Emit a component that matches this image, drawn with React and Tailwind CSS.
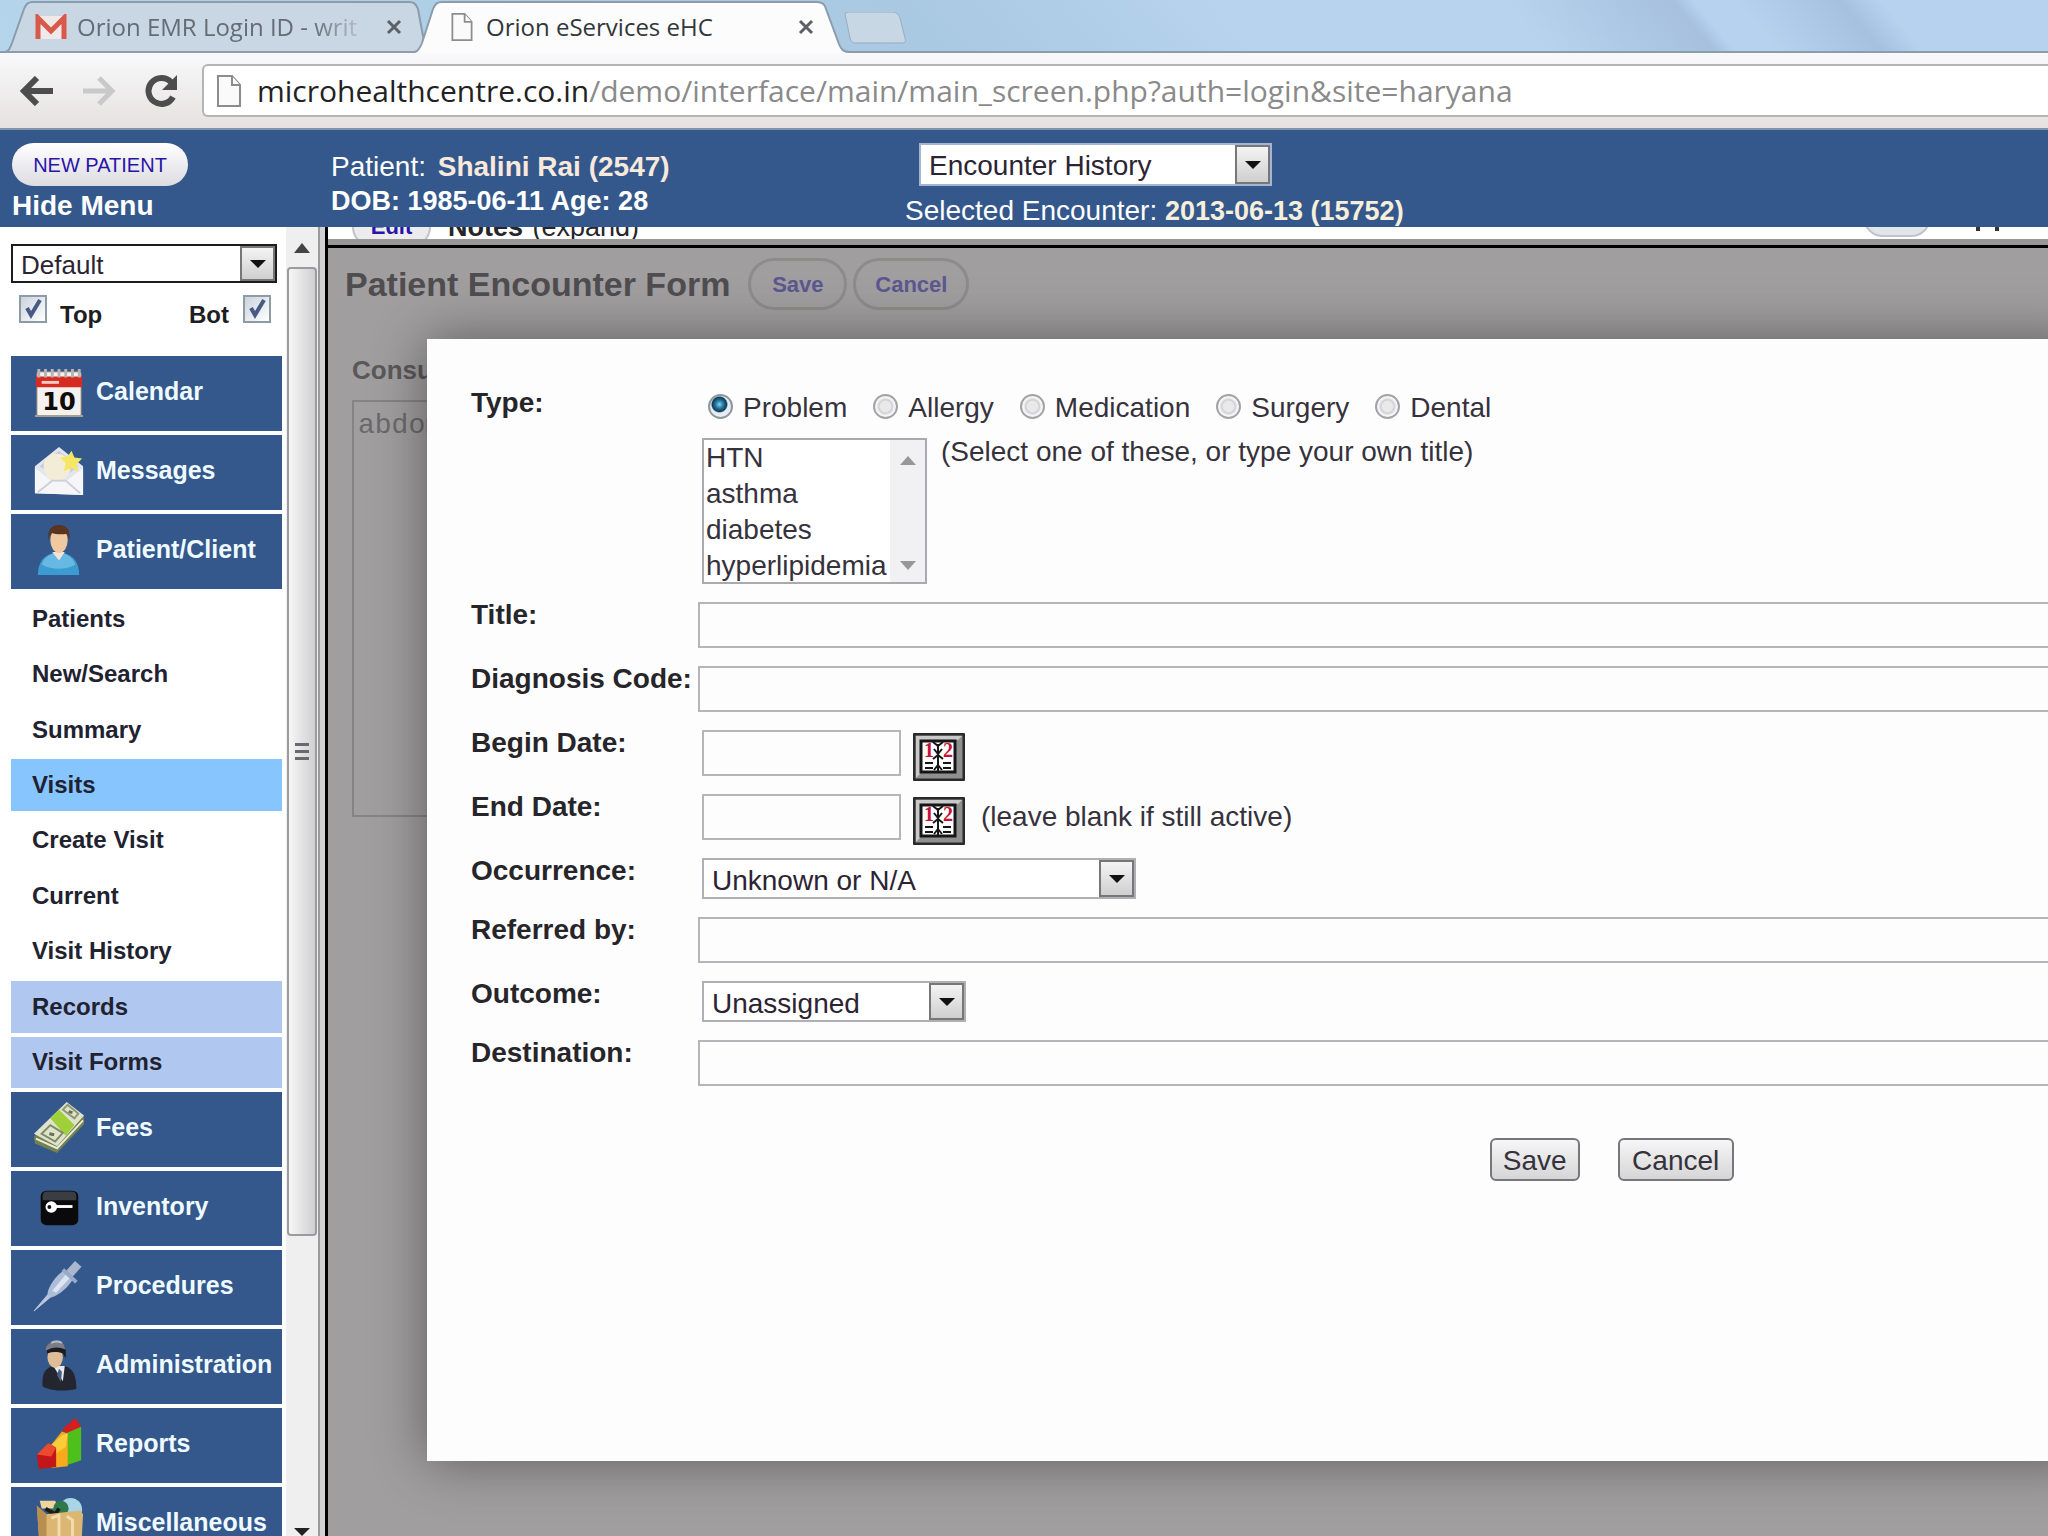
import React, { useState } from 'react';

const CalendarIcon = () => (
  <svg viewBox="0 0 52 54" className="w-13 h-13 shrink-0">
    <rect x="3" y="6" width="46" height="46" rx="2" fill="#f4f1ee" stroke="#8b7a70" />
    <path d="M2 11h48v11H2z" fill="#d62b22" />
    <path d="M5 3v9M12 3v9M19 3v9M26 3v9M33 3v9M40 3v9M47 3v9" stroke="#b9b3b3" strokeWidth="3" />
    <path d="M8 17h18" stroke="#f6c9c4" strokeWidth="3" />
    <path d="M1 52h50" stroke="#a4a08a" strokeWidth="2" />
    <text x="26" y="46" textAnchor="middle" fontSize="25" fontWeight="bold" fontFamily="DejaVu Sans, sans-serif" fill="#0c0c0c">10</text>
  </svg>
);

const MessagesIcon = () => (
  <svg viewBox="0 0 52 54" className="w-13 h-13 shrink-0">
    <path d="M1 22 26 2 51 22v30L1 50z" fill="#e3e6ee" />
    <path d="M6 22 26 6l20 16-20 16z" fill="#c6cddd" />
    <circle cx="24" cy="23" r="14" fill="#f3ecd6" />
    <path d="m39 6 3 7 8 1-6 6 2 8-7-4-8 3 2-8-6-6 8-1z" fill="#f5e663" />
    <path d="M1 24l18 14h14l18-14v28L1 50z" fill="#f6f6f9" />
    <path d="M4 49l15-12h14l15 13" fill="none" stroke="#cdd0da" strokeWidth="2" />
  </svg>
);

const PatientIcon = () => (
  <svg viewBox="0 0 52 54" className="w-13 h-13 shrink-0">
    <path d="M4 53c0-13 6-21 17-23h9c11 2 17 10 17 23z" fill="#3c9bd0" />
    <path d="M8 42c2-6 7-10 13-12h9c7 2 11 7 13 12-10 6-24 6-35 0z" fill="#67b9e4" />
    <path d="M19 29h13l-6 9z" fill="#f3e3d8" />
    <ellipse cx="26" cy="17" rx="9" ry="13" fill="#f0c9a0" />
    <path d="M15 16C14 5 19 1 26 1s12 4 11 15l-3-6c-5 1-11 1-16-1z" fill="#5a3420" />
  </svg>
);

const FeesIcon = () => (
  <svg viewBox="0 0 52 54" className="w-13 h-13 shrink-0">
    <path d="M0 36 34 1l18 14v8L24 53 1 43z" fill="#74804f" />
    <path d="M0 33 34 0l18 14-28 32z" fill="#dfe3cc" />
    <path d="M17 17 26 8l16 16-9 11z" fill="#9fd03a" />
    <path d="m8 33 9-9 13 8-8 9z" fill="none" stroke="#7d8a62" strokeWidth="2" />
    <path d="m30 8 5-5 11 9-4 5z" fill="none" stroke="#8d9a72" strokeWidth="2" />
    <path d="M2 38l22 10 27-29" fill="none" stroke="#e9ecd8" strokeWidth="2" />
    <path d="M16 33l5 1M36 10l4 1" stroke="#68704f" strokeWidth="3" />
  </svg>
);

const InventoryIcon = () => (
  <svg viewBox="0 0 52 54" className="w-13 h-13 shrink-0">
    <rect x="7" y="10" width="39" height="36" rx="6" fill="#0a0a0c" />
    <path d="M9 16c0-4 2-5 5-5h25c3 0 5 1 5 5v4H9z" fill="#3a3d42" />
    <circle cx="18" cy="27" r="6" fill="#fff" />
    <circle cx="16" cy="27" r="2" fill="#111" />
    <path d="M22 25h18v3h-18z" fill="#fff" />
  </svg>
);

const ProceduresIcon = () => (
  <svg viewBox="0 0 52 54" className="w-13 h-13 shrink-0">
    <path d="M0 53 16 34l3 3z" fill="#b9c6dc" stroke="#b9c6dc" strokeWidth="1" />
    <path d="M14 35c1-8 9-19 18-25l9 9c-5 9-14 17-23 20z" fill="#aebdd7" />
    <path d="M19 32 33 15l4 4-14 15z" fill="#dde5f1" />
    <path d="m30 10 14 13" stroke="#9aabc8" strokeWidth="4" />
    <path d="M37 14 46 4" stroke="#a9b8d0" strokeWidth="9" />
  </svg>
);

const AdminIcon = () => (
  <svg viewBox="0 0 52 54" className="w-13 h-13 shrink-0">
    <path d="M9 49c-1-12 2-19 11-21h12c9 3 12 10 12 24-8 2-26 3-35-3z" fill="#23262f" />
    <path d="M20 28h12l-2 16z" fill="#e7e9ef" />
    <path d="m26 31 3 3-1 11-4-7z" fill="#4a5a80" />
    <ellipse cx="22" cy="19" rx="8" ry="11" fill="#e0bd99" />
    <path d="M12 10C15 2 27-2 31 6l2 7c-6-3-13-3-19 1z" fill="#7c7c88" />
    <path d="M13 12c6-4 13-4 20-1v9l-3-5c-6-2-11-2-16 0z" fill="#1b1b20" />
    <path d="M18 4c4-2 7-2 11 0" stroke="#b8bac4" strokeWidth="2" fill="none" />
  </svg>
);

const ReportsIcon = () => (
  <svg viewBox="0 0 52 54" className="w-13 h-13 shrink-0">
    <path d="m29 12 14-12 6 9-12 9z" fill="#d51f1f" />
    <path d="M31 17 49 9v35l-18 6z" fill="#4fc01b" />
    <path d="M17 29 29 14l6 2v34l-17 2z" fill="#f9a91b" />
    <path d="m17 29 12-11 6-2-2 14-12 8z" fill="#fbcd3b" />
    <path d="M3 39 15 26l8 5v20L5 53z" fill="#c3161a" />
    <path d="m3 38 12-12 8 5-5 9z" fill="#ea4a2d" />
  </svg>
);

const MiscIcon = () => (
  <svg viewBox="0 0 52 54" className="w-13 h-13 shrink-0">
    <path d="M6 4h16l4 8H8z" fill="#eed5a0" />
    <circle cx="38" cy="13" r="12" fill="#a9d5e6" />
    <circle cx="28" cy="12" r="8" fill="#2c7a4b" />
    <path d="M12 12l10 6 4-6" stroke="#1c1c14" strokeWidth="4" fill="none" />
    <path d="M3 9l10 9 35-4 3 4-2 36H6z" fill="#dcb673" />
    <path d="M3 9l10 9v36H6z" fill="#b98f4f" />
    <path d="M18 22l8-3v30M34 20l6 4v25" stroke="#f1dcae" strokeWidth="3" fill="none" />
  </svg>
);

const topMenu = [
  { label: 'Calendar', Icon: CalendarIcon },
  { label: 'Messages', Icon: MessagesIcon },
  { label: 'Patient/Client', Icon: PatientIcon },
];

const subMenu = [
  { label: 'Patients', bg: '' },
  { label: 'New/Search', bg: '' },
  { label: 'Summary', bg: '' },
  { label: 'Visits', bg: 'bg-[#87c5ff]' },
  { label: 'Create Visit', bg: '' },
  { label: 'Current', bg: '' },
  { label: 'Visit History', bg: '' },
  { label: 'Records', bg: 'bg-[#b0c7f0]' },
  { label: 'Visit Forms', bg: 'bg-[#b0c7f0]' },
];

const bottomMenu = [
  { label: 'Fees', Icon: FeesIcon },
  { label: 'Inventory', Icon: InventoryIcon },
  { label: 'Procedures', Icon: ProceduresIcon },
  { label: 'Administration', Icon: AdminIcon },
  { label: 'Reports', Icon: ReportsIcon },
  { label: 'Miscellaneous', Icon: MiscIcon },
];

const issueTypes = ['Problem', 'Allergy', 'Medication', 'Surgery', 'Dental'];

const PageIcon = ({ className }) => (
  <svg viewBox="0 0 24 32" className={className} fill="#fafafa" stroke="#8c8c8c" strokeWidth="2">
    <path d="M1 1h14l8 9v21H1z" />
    <path d="M15 1v9h8" />
  </svg>
);

const CloseButton = ({ label }) => (
  <button type="button" aria-label={label} className="shrink-0">
    <svg viewBox="0 0 16 16" className="w-4 h-4" stroke="#5d6166" strokeWidth="3">
      <path d="M2 2l12 12M14 2 2 14" />
    </svg>
  </button>
);

const BrowserTabs = () => (
  <div className="flex h-[53px] shrink-0 border-b-2 border-[#8c9cab] bg-[linear-gradient(50deg,#b5d5ec_0%,#a9c8e2_45%,#b7d3ed_60%,#b7d3ed_74%,#a6c0de_82%,#b6d2ef_83%,#b6d2ef_85%,#a6c1df_90%,#b6d2ef_92%)] pl-1">
    <div className="relative w-[422px] h-[53px] shrink-0">
      <svg viewBox="0 0 422 53" preserveAspectRatio="none" className="absolute inset-0 w-full h-full">
        <path d="M0 52c5 0 6-4 8-9L20 9c2-5 4-7 9-7h376c5 0 7 2 9 7l8 43z" fill="#c9d6e3" stroke="#8c9cab" strokeWidth="2" />
      </svg>
      <div className="relative flex items-center h-full pl-[31px] pr-[24px]">
        <svg viewBox="0 0 32 26" className="w-8 h-[26px] shrink-0">
          <path d="M1 2h30v23H1z" fill="#efe9ea" />
          <path d="M3 25V4l13 13L29 4v21" fill="none" stroke="#d8584c" strokeWidth="5" />
        </svg>
        <span className="ml-2.5 flex-1 whitespace-nowrap text-[24px] text-[#646c76] [mask-image:linear-gradient(to_right,black_80%,transparent)]">
          Orion EMR Login ID - writ
        </span>
        <span className="ml-4 flex"><CloseButton label="Close Orion EMR Login ID" /></span>
      </div>
    </div>
    <div className="relative -ml-3 w-[436px] h-[53px] shrink-0">
      <svg viewBox="0 0 436 53" preserveAspectRatio="none" className="absolute inset-0 w-full h-full">
        <path d="M0 53c4 0 6-4 8-9L19 9c2-5 4-7 9-7h375c5 0 8 2 9 7l13 35c2 5 4 9 11 9z" fill="#fcfcfd" />
        <path d="M0 52c4 0 6-4 8-9L19 9c2-5 4-7 9-7h375c5 0 8 2 9 7l13 35c2 5 4 8 11 8" fill="none" stroke="#8c9cab" strokeWidth="2" />
      </svg>
      <div className="relative flex items-center h-full pl-9 pr-9">
        <PageIcon className="w-6 h-7 shrink-0" />
        <span className="ml-3 flex-1 whitespace-nowrap text-[24px] text-[#33363b]">Orion eServices eHC</span>
        <CloseButton label="Close Orion eServices eHC" />
      </div>
    </div>
    <button type="button" aria-label="New tab" className="-ml-1.5 mt-3 h-8 shrink-0">
      <svg viewBox="0 0 62 32" className="w-[62px] h-8">
        <path d="M1 2q0-2 3-2h44c5 0 6 2 8 6l5 20c1 4 0 5-3 5H12c-4 0-5-2-6-5z" fill="#c8d7e4" stroke="#98acbf" strokeWidth="1" />
      </svg>
    </button>
  </div>
);

const Toolbar = () => (
  <div className="flex h-[77px] shrink-0 items-center border-b-2 border-[#8294a8] bg-linear-to-b from-[#f9f9fb] to-[#e5e2e0] pl-5">
    <button type="button" aria-label="Back">
      <svg viewBox="0 0 34 30" className="w-[34px] h-[30px]" fill="none" stroke="#4d4d4d" strokeWidth="6">
        <path d="M17 2 4 15l13 13M5 15h28" />
      </svg>
    </button>
    <button type="button" aria-label="Forward" className="ml-7">
      <svg viewBox="0 0 34 30" className="w-[34px] h-[30px]" fill="none" stroke="#c9c9c9" strokeWidth="5">
        <path d="m17 2 13 13-13 13M29 15H1" />
      </svg>
    </button>
    <button type="button" aria-label="Reload" className="ml-7">
      <svg viewBox="0 0 34 34" className="w-[34px] h-[34px]">
        <path d="M29 23a13 13 0 1 1-2-15" fill="none" stroke="#4d4d4d" strokeWidth="6" />
        <path d="M33 1v15H18z" fill="#4d4d4d" />
      </svg>
    </button>
    <div className="ml-6 flex h-[53px] flex-1 items-center rounded-l-md border-2 border-r-0 border-[#b4b4b6] bg-white pl-[13px]">
      <PageIcon className="w-6 h-8" />
      <div className="ml-4 whitespace-nowrap text-[30px] text-[#8a8a8a]">
        <span className="text-[#222]">microhealthcentre.co.in</span>/demo/interface/main/main_screen.php?auth=login&amp;site=haryana
      </div>
    </div>
  </div>
);

const DropDown = ({ id, label, value, className, boxClass }) => (
  <div className={`relative ${className}`}>
    <select id={id} aria-label={label} className={`w-full h-full appearance-none bg-white text-[#2c2433] outline-none ${boxClass}`}>
      <option>{value}</option>
    </select>
    <span className="pointer-events-none absolute inset-y-[2px] right-[2px] flex w-[35px] items-center justify-center border-2 border-[#77777a] bg-linear-to-b from-[#f4f4f4] to-[#cfcfcf]">
      <svg viewBox="0 0 16 8" className="w-4 h-2"><path d="M0 0h16L8 8z" fill="#111" /></svg>
    </span>
  </div>
);

const Header = () => (
  <header className="flex h-[97px] shrink-0 bg-[#34588b] text-white">
    <div className="w-[331px] shrink-0 pl-3 pt-[13px]">
      <button type="button" className="block h-[43px] w-[176px] rounded-full bg-linear-to-b from-white to-[#dcdce2] text-[20px] text-[#2a14a8]">
        NEW PATIENT
      </button>
      <a href="#menu" className="block text-[28px] leading-[40px] font-bold">Hide Menu</a>
    </div>
    <div className="w-[574px] shrink-0 pt-5">
      <div className="text-[28px] leading-[34px]">
        Patient: <a href="#patient" className="ml-1 font-bold text-[#f9e9dc]">Shalini Rai (2547)</a>
      </div>
      <div className="text-[27px] leading-[34px] font-bold">DOB: 1985-06-11 Age: 28</div>
    </div>
    <div className="pt-[13px]">
      <DropDown label="Encounter History" value="Encounter History" className="ml-3.5 h-[43px] w-[353px]" boxClass="border-2 border-[#a5b4d2] pl-2 text-[28px]" />
      <div className="pt-2 text-[28px] leading-[34px]">
        Selected Encounter: <span className="text-[27px] font-bold text-[#f7efdc]">2013-06-13 (15752)</span>
      </div>
    </div>
  </header>
);

const TickBox = ({ id }) => (
  <span className="relative flex w-7 h-7">
    <input id={id} type="checkbox" defaultChecked className="peer w-7 h-7 appearance-none border-2 border-[#8e9aa6] bg-linear-to-br from-[#ccd3dc] to-white" />
    <svg viewBox="0 0 28 28" className="pointer-events-none absolute inset-0 hidden peer-checked:block" fill="none" stroke="#465a86" strokeWidth="4">
      <path d="m8 13 4 7L21 5" />
    </svg>
  </span>
);

const MenuBlock = ({ label, Icon }) => (
  <a href="#menu" className="flex h-[75px] shrink-0 items-center bg-[#34588b] pl-[22px] pb-1 text-[25px] font-bold text-[#eefaff]">
    <Icon />
    <span className="ml-[11px]">{label}</span>
  </a>
);

const Sidebar = () => (
  <aside className="flex shrink-0 overflow-hidden">
    <nav className="flex w-[286px] flex-col gap-1 pl-[11px] pr-1 pt-[17px]">
      <DropDown label="Menu role" value="Default" className="h-[39px] w-[266px] shrink-0" boxClass="border-2 border-[#1c1c1c] pl-2 text-[26px]" />
      <div className="mb-2 flex h-[57px] shrink-0 items-start justify-between pl-2 pr-[11px] pt-2 text-[24px] font-bold text-[#1e1e22]">
        <div className="flex gap-[13px]">
          <TickBox id="top" />
          <label htmlFor="top" className="leading-[40px]">Top</label>
        </div>
        <div className="flex gap-[14px]">
          <label htmlFor="bot" className="leading-[40px]">Bot</label>
          <TickBox id="bot" />
        </div>
      </div>
      {topMenu.map((item) => (
        <MenuBlock key={item.label} {...item} />
      ))}
      <div className="flex h-[495px] shrink-0 flex-col gap-1">
        {subMenu.map(({ label, bg }) => (
          <a key={label} href="#sub" className={`flex flex-1 items-center pl-[21px] text-[24px] font-bold text-[#1f2230] ${bg}`}>
            {label}
          </a>
        ))}
      </div>
      {bottomMenu.map((item) => (
        <MenuBlock key={item.label} {...item} />
      ))}
    </nav>
    {/* frame scrollbar */}
    <div className="flex w-8 flex-col items-center bg-[#f0eff0]">
      <svg viewBox="0 0 16 10" className="mt-4 w-4 h-2.5 shrink-0"><path d="M0 10h16L8 0z" fill="#444" /></svg>
      <div className="mt-3.5 flex h-[969px] w-[30px] shrink-0 flex-col items-center justify-center gap-1 rounded-sm border-2 border-[#9b9b9e] bg-linear-to-r from-[#f7f7f7] to-[#cfcfd2]">
        <span className="h-[3px] w-3.5 bg-[#6a6a6e]"></span>
        <span className="h-[3px] w-3.5 bg-[#6a6a6e]"></span>
        <span className="h-[3px] w-3.5 bg-[#6a6a6e]"></span>
      </div>
      <svg viewBox="0 0 16 8" className="mt-auto w-4 h-2 shrink-0"><path d="M0 0h16L8 8z" fill="#222" /></svg>
    </div>
    <div className="w-2.5 border-l-2 border-r-3 border-l-[#9a9a9c] border-r-black bg-[#d2d2d4]"></div>
  </aside>
);

const DateButton = ({ label }) => (
  <button type="button" aria-label={label} className="mt-2 h-12 shrink-0">
    <svg viewBox="0 0 52 48" className="w-[52px] h-12">
      <rect x="1" y="1" width="50" height="46" rx="2" fill="#8f8f8f" stroke="#2a2a2a" strokeWidth="3" />
      <path d="M3 45V3h46l-4 4H7v34z" fill="#c9c9c9" />
      <rect x="8" y="8" width="34" height="31" fill="#fff" stroke="#161616" strokeWidth="3" />
      <text x="16" y="24" textAnchor="middle" fontSize="20" fontWeight="bold" fontFamily="Liberation Serif, serif" fill="#c8102e">1</text>
      <text x="35" y="24" textAnchor="middle" fontSize="20" fontWeight="bold" fontFamily="Liberation Serif, serif" fill="#c8102e">2</text>
      <path d="m20 9 5 4 5-4M25 11v28M21 16l4 5 4-5M20 26l5-4 5 4M21 37l4-5 4 5" fill="none" stroke="#161616" strokeWidth="2" />
      <path d="M12 30h8M12 35h8M30 30h8M30 35h8" stroke="#161616" strokeWidth="2" />
    </svg>
  </button>
);

const Label = ({ htmlFor, children }) => (
  <label htmlFor={htmlFor} className="leading-[26px] font-bold whitespace-nowrap text-[#26262a]">{children}</label>
);

const WideInput = ({ id }) => (
  <input id={id} type="text" className="h-[46px] w-full border-2 border-r-0 border-[#b6b6ba] bg-[#fdfdfe] outline-none" />
);

const IssueDialog = () => {
  const [type, setType] = useState('Problem');

  return (
    <form
      role="dialog"
      aria-label="Issue"
      className="absolute left-[99px] -right-10 top-[112px] bottom-[75px] bg-[#fefdfe] pl-11 pt-[51px] text-[28px] text-[#36323c] shadow-[0_0_50px_rgba(0,0,0,0.42)]"
    >
      <div className="grid grid-cols-[227px_1fr] gap-y-[18px]">
        <span className="leading-[26px] font-bold text-[#26262a]">Type:</span>
        <div className="pl-1">
          <div className="flex h-9 items-center gap-[26px] pl-1.5">
            {issueTypes.map((name) => (
              <label key={name} className="flex items-center gap-2.5 leading-9">
                <input
                  type="radio"
                  name="type"
                  checked={type === name}
                  onChange={() => setType(name)}
                  className="mb-1 w-[25px] h-[25px] appearance-none rounded-full border-2 border-[#a3a3a6] bg-[radial-gradient(circle,#e9e9ea_35%,#cfcfd2_45%,#f5f5f5_60%)] checked:border-[#8d979f] checked:bg-[radial-gradient(circle_at_45%_40%,#7fd3ee_0%,#1f7098_25%,#123c56_42%,#e4edf2_50%)]"
                />
                {name}
              </label>
            ))}
          </div>
          <div className="mt-3 flex">
            <div className="flex h-[146px] w-[225px] border-2 border-[#aaaaae] bg-white">
              <select multiple size={4} aria-label="Common titles" className="h-full flex-1 appearance-none overflow-hidden pl-0.5 pt-0.5 outline-none">
                <option className="h-9 p-0 leading-9">HTN</option>
                <option className="h-9 p-0 leading-9">asthma</option>
                <option className="h-9 p-0 leading-9">diabetes</option>
                <option className="h-9 p-0 leading-9">hyperlipidemia</option>
              </select>
              <div className="flex w-[35px] flex-col items-center justify-between bg-[#f1f0f2] pt-4 pb-3">
                <svg viewBox="0 0 16 9" className="w-4 h-[9px]"><path d="M0 9h16L8 0z" fill="#97979b" /></svg>
                <svg viewBox="0 0 16 9" className="w-4 h-[9px]"><path d="M0 0h16L8 9z" fill="#97979b" /></svg>
              </div>
            </div>
            <span className="ml-3.5 leading-7">(Select one of these, or type your own title)</span>
          </div>
        </div>

        <Label htmlFor="title">Title:</Label>
        <WideInput id="title" />

        <Label htmlFor="diagnosis">Diagnosis Code:</Label>
        <WideInput id="diagnosis" />

        <Label htmlFor="begin">Begin Date:</Label>
        <div className="flex h-[46px] items-center gap-3 pl-1">
          <input id="begin" type="text" className="h-[46px] w-[199px] border-2 border-[#b6b6ba] outline-none" />
          <DateButton label="Choose begin date" />
        </div>

        <Label htmlFor="end">End Date:</Label>
        <div className="flex h-[46px] items-center gap-3 pl-1">
          <input id="end" type="text" className="h-[46px] w-[199px] border-2 border-[#b6b6ba] outline-none" />
          <DateButton label="Choose end date" />
          <span className="ml-1">(leave blank if still active)</span>
        </div>

        <Label htmlFor="occurrence">Occurrence:</Label>
        <DropDown id="occurrence" value="Unknown or N/A" className="ml-1 h-[41px] w-[434px]" boxClass="border-2 border-[#b0b0b4] pl-2" />

        <Label htmlFor="referred">Referred by:</Label>
        <WideInput id="referred" />

        <Label htmlFor="outcome">Outcome:</Label>
        <DropDown id="outcome" value="Unassigned" className="ml-1 h-[41px] w-[264px]" boxClass="border-2 border-[#b0b0b4] pl-2" />

        <Label htmlFor="destination">Destination:</Label>
        <WideInput id="destination" />
      </div>

      <div className="ml-[63%] mt-[52px] flex gap-[38px]">
        <button type="button" className="h-[43px] w-[90px] rounded-md border-2 border-[#77777b] bg-linear-to-b from-[#f6f6f6] to-[#d6d6d8]">Save</button>
        <button type="button" className="h-[43px] w-[116px] rounded-md border-2 border-[#77777b] bg-linear-to-b from-[#f6f6f6] to-[#d6d6d8]">Cancel</button>
      </div>
    </form>
  );
};

const EncounterPage = () => (
  <main className="relative flex flex-1 flex-col overflow-hidden bg-[#a09e9f]">
    {/* tail of the frame above */}
    <div className="flex h-3 shrink-0 items-end overflow-hidden bg-white pl-6 text-[27px] leading-[23px]">
      <button type="button" className="-mb-2 flex h-10 w-[79px] shrink-0 items-end justify-center rounded-full border-2 border-[#c4c4c8] bg-[#ececee] pb-[7px] text-[22px] leading-none font-bold text-[#2a14a8]">Edit</button>
      <div className="ml-[17px] text-[#26262a]">
        <span className="font-bold">Notes</span> <a href="#notes" className="ml-0.5">(expand)</a>
      </div>
      <span className="ml-auto mr-[45px] mb-0.5 h-10 w-[68px] rounded-full border-2 border-[#c0c4c8] bg-[#dfe5ea]"></span>
      <span className="mb-2 mr-[15px] h-1 w-1 bg-[#333]"></span>
      <span className="mb-2 mr-[49px] h-1 w-1 bg-[#333]"></span>
    </div>
    <div className="h-[9px] shrink-0 border-b-3 border-black bg-[#999797]"></div>
    <div className="flex items-center gap-1.5 pl-[17px] pt-2.5">
      <h1 className="mr-3 text-[34px] font-bold text-[#4f4d4f]">Patient Encounter Form</h1>
      <button type="button" className="h-[52px] w-[99px] rounded-full border-3 border-[#8e8c8b] text-[22px] font-bold text-[#5b5890]">Save</button>
      <button type="button" className="h-[52px] w-[116px] rounded-full border-3 border-[#8e8c8b] text-[22px] font-bold text-[#5b5890]">Cancel</button>
    </div>
    <div className="flex flex-col pl-6 pt-[42px]">
      <label htmlFor="consultation" className="text-[26px] leading-[36px] font-bold text-[#5a585a]">Consultation</label>
      <textarea
        id="consultation"
        defaultValue="abdominal pain"
        className="mt-3 h-[417px] w-[480px] resize-none border-2 border-[#858384] px-1 py-2 font-['Liberation_Mono',monospace] text-[28px] leading-8 text-[#6b696b]"
      />
    </div>
    <IssueDialog />
  </main>
);

const App = () => {
  return (
    <div className="flex h-screen flex-col overflow-hidden bg-white font-['Liberation_Sans',Arial,sans-serif]">
      <div className="font-['Open_Sans','Noto_Sans',sans-serif]">
        <BrowserTabs />
        <Toolbar />
      </div>
      <Header />
      <div className="flex min-h-0 flex-1">
        <Sidebar />
        <EncounterPage />
      </div>
    </div>
  );
};

export default App;
